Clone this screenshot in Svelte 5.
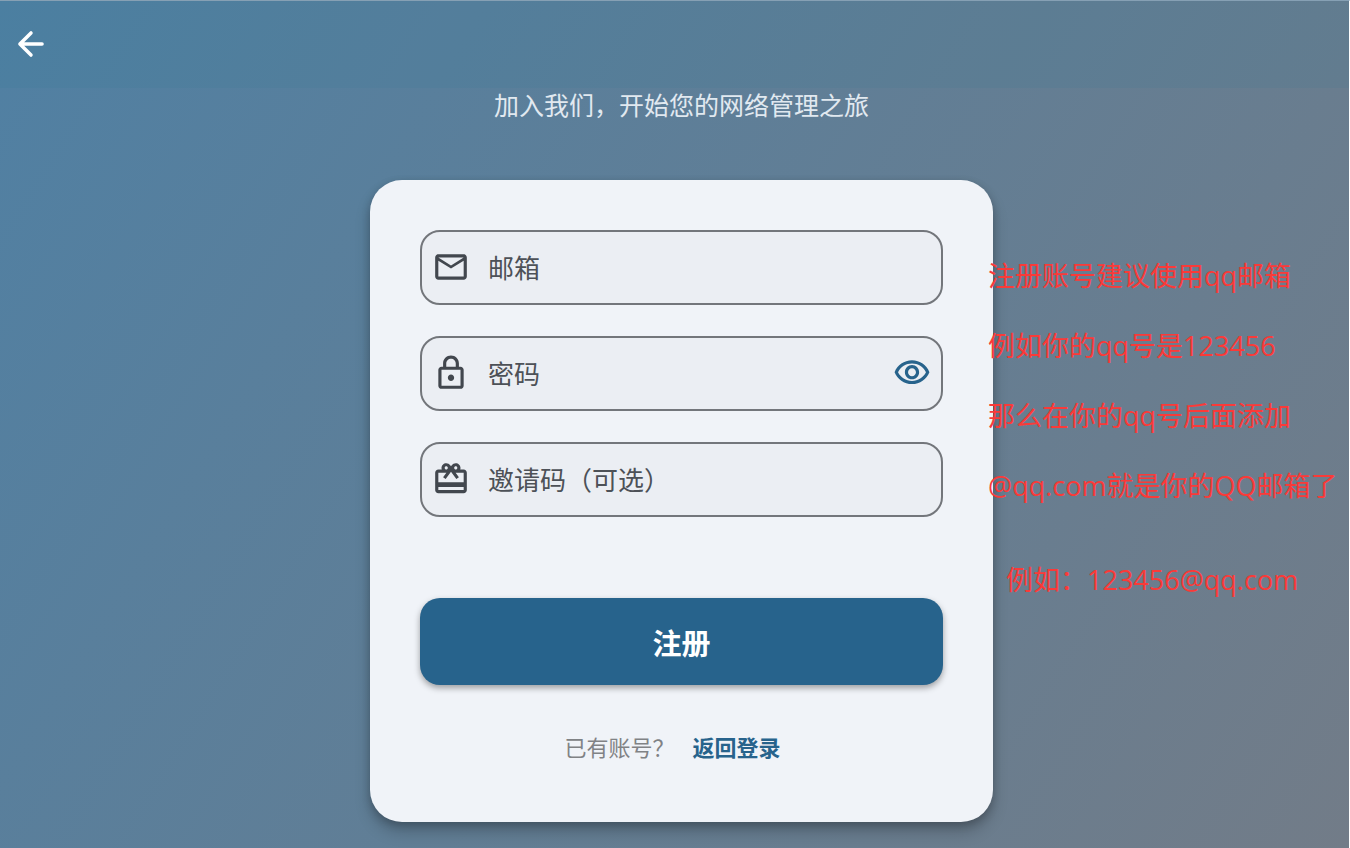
<script>
  let email = $state('');
  let password = $state('');
  let inviteCode = $state('');
  let showPassword = $state(false);

  const tips = [
    '注册账号建议使用qq邮箱',
    '例如你的qq号是123456',
    '那么在你的qq号后面添加',
    '@qq.com就是你的QQ邮箱了'
  ];

  function handleSubmit(e) {
    e.preventDefault();
  }
</script>

<div class="register-page">
  <header class="top-bar">
    <button class="btn-back" aria-label="返回">
      <svg viewBox="0 0 24 24" class="icon stroked">
        <path d="M19 12H5M12 5l-7 7 7 7" />
      </svg>
    </button>
  </header>

  <main class="content">
    <p class="subtitle">加入我们，开始您的网络管理之旅</p>

    <div class="card">
      <form onsubmit={handleSubmit}>
        <div class="fields">
          <label class="field">
            <svg viewBox="0 0 24 24" class="icon">
              <path d="M22 6c0-1.1-.9-2-2-2H4c-1.1 0-2 .9-2 2v12c0 1.1.9 2 2 2h16c1.1 0 2-.9 2-2V6zm-2 0-8 5-8-5h16zm0 12H4V8l8 5 8-5v10z" />
            </svg>
            <input type="email" placeholder="邮箱" aria-label="邮箱" bind:value={email} />
          </label>

          <div class="field">
            <svg viewBox="0 0 24 24" class="icon">
              <path d="M18 8h-1V6c0-2.76-2.24-5-5-5S7 3.24 7 6v2H6c-1.1 0-2 .9-2 2v10c0 1.1.9 2 2 2h12c1.1 0 2-.9 2-2V10c0-1.1-.9-2-2-2zM9 6c0-1.66 1.34-3 3-3s3 1.34 3 3v2H9V6zm9 14H6V10h12v10zm-6-3c1.1 0 2-.9 2-2s-.9-2-2-2-2 .9-2 2 .9 2 2 2z" />
            </svg>
            <input
              type={showPassword ? 'text' : 'password'}
              placeholder="密码"
              aria-label="密码"
              bind:value={password}
            />
            <button
              type="button"
              class="btn-eye"
              aria-label="显示密码"
              onclick={() => (showPassword = !showPassword)}
            >
              <svg viewBox="0 0 24 24" class="icon">
                <path d="M12 6c3.79 0 7.17 2.13 8.82 5.5C19.17 14.87 15.79 17 12 17s-7.17-2.13-8.82-5.5C4.83 8.13 8.21 6 12 6m0-2C7 4 2.73 7.11 1 11.5 2.73 15.89 7 19 12 19s9.27-3.11 11-7.5C21.27 7.11 17 4 12 4zm0 5c1.38 0 2.5 1.12 2.5 2.5S13.38 14 12 14s-2.5-1.12-2.5-2.5S10.62 9 12 9m0-2c-2.48 0-4.5 2.02-4.5 4.5S9.52 16 12 16s4.5-2.02 4.5-4.5S14.48 7 12 7z" />
              </svg>
            </button>
          </div>

          <label class="field">
            <svg viewBox="0 0 24 24" class="icon">
              <path d="M20 6h-2.18c.11-.31.18-.65.18-1 0-1.66-1.34-3-3-3-1.05 0-1.96.54-2.5 1.35l-.5.67-.5-.68C10.96 2.54 10.05 2 9 2 7.34 2 6 3.34 6 5c0 .35.07.69.18 1H4c-1.11 0-1.99.89-1.99 2L2 19c0 1.11.89 2 2 2h16c1.11 0 2-.89 2-2V8c0-1.11-.89-2-2-2zm-5-2c.55 0 1 .45 1 1s-.45 1-1 1-1-.45-1-1 .45-1 1-1zM9 4c.55 0 1 .45 1 1s-.45 1-1 1-1-.45-1-1 .45-1 1-1zm11 15H4v-2h16v2zm0-5H4V8h5.08L7 10.83 8.62 12 12 7.4l3.38 4.6L17 10.83 14.92 8H20v6z" />
            </svg>
            <input type="text" placeholder="邀请码（可选）" aria-label="邀请码（可选）" bind:value={inviteCode} />
          </label>
        </div>

        <button type="submit" class="btn-register">注册</button>
      </form>

      <div class="login-row">
        <span>已有账号？</span>
        <a href="#login">返回登录</a>
      </div>

      <!-- Hint text hangs over the right edge of the card -->
      <aside class="tips">
        {#each tips as tip}
          <p>{tip}</p>
        {/each}
        <p class="sample">例如：123456@qq.com</p>
      </aside>
    </div>
  </main>
</div>

<style>
  :global(body) {
    margin: 0;
  }

  .register-page {
    box-sizing: border-box;
    min-height: 100vh;
    overflow: hidden;
    border-top: 1px solid #86a0b4;
    border-right: 1px solid #fff;
    background: linear-gradient(122deg, #5080a3, #727c88);
    font-family: 'Open Sans', 'Noto Sans CJK SC', sans-serif;
  }

  button,
  input {
    font-family: inherit;
  }

  .icon {
    display: block;
    flex: none;
    width: 38px;
    height: 38px;
    fill: currentColor;
  }

  .icon.stroked {
    fill: none;
    stroke: currentColor;
    stroke-width: 2.2;
    stroke-linecap: round;
    stroke-linejoin: round;
  }

  .top-bar {
    display: flex;
    align-items: center;
    box-sizing: border-box;
    height: 87px;
    padding: 0 12px 1px;
    background: rgba(39, 120, 145, 0.1);
  }

  .btn-back,
  .btn-eye {
    padding: 0;
    border: none;
    background: transparent;
    cursor: pointer;
  }

  .btn-back {
    color: #fff;
  }

  .btn-eye {
    color: #27638c;
  }

  .content {
    display: flex;
    flex-direction: column;
    align-items: center;
    padding: 0 0 24px 14px;
  }

  .subtitle {
    margin: 0 0 60px;
    color: #e1e9f0;
    font-family: 'Noto Sans CJK SC', sans-serif;
    font-size: 25px;
    line-height: 32px;
  }

  .card {
    position: relative;
    box-sizing: border-box;
    width: 100%;
    max-width: 623px;
    padding: 50px;
    border-radius: 32px;
    background: #f0f3f8;
    box-shadow: 0 10px 16px rgba(0, 0, 0, 0.2), 0 3px 8px rgba(0, 0, 0, 0.2);
  }

  .fields {
    display: flex;
    flex-direction: column;
    gap: 31px;
    margin-bottom: 81px;
  }

  .field {
    display: flex;
    align-items: center;
    gap: 18px;
    box-sizing: border-box;
    height: 75px;
    padding: 0 10px 1px;
    border: 2px solid #73767b;
    border-radius: 20px;
    background: #ebeef3;
    color: #42474e;
  }

  .field input {
    flex: 1;
    min-width: 0;
    padding: 0;
    border: none;
    outline: none;
    background: transparent;
    color: inherit;
    font-family: 'Noto Sans CJK SC', sans-serif;
    font-size: 26px;
    line-height: 38px;
  }

  .field input::placeholder {
    color: #4d5157;
    opacity: 1;
  }

  .btn-register {
    display: block;
    width: 100%;
    height: 87px;
    border: none;
    border-radius: 20px;
    background: #27638c;
    box-shadow: 0 3px 6px rgba(0, 0, 0, 0.35);
    color: #fff;
    font-size: 29px;
    font-weight: 700;
    cursor: pointer;
  }

  .login-row {
    display: flex;
    justify-content: center;
    margin-top: 45px;
    padding-bottom: 10px;
    font-family: 'Noto Sans CJK SC', sans-serif;
    font-size: 22px;
    line-height: 32px;
  }

  .login-row span {
    color: #808285;
  }

  .login-row a {
    padding: 0 18px;
    color: #27638c;
    font-weight: 700;
    text-decoration: none;
  }

  .tips {
    position: absolute;
    top: 78px;
    left: 618px;
    display: flex;
    flex-direction: column;
    gap: 34px;
    width: max-content;
    color: #fa3a38;
    font-size: 27px;
    line-height: 36px;
  }

  .tips p {
    margin: 0;
  }

  .tips .sample {
    padding: 24px 0 0 18px;
  }
</style>
